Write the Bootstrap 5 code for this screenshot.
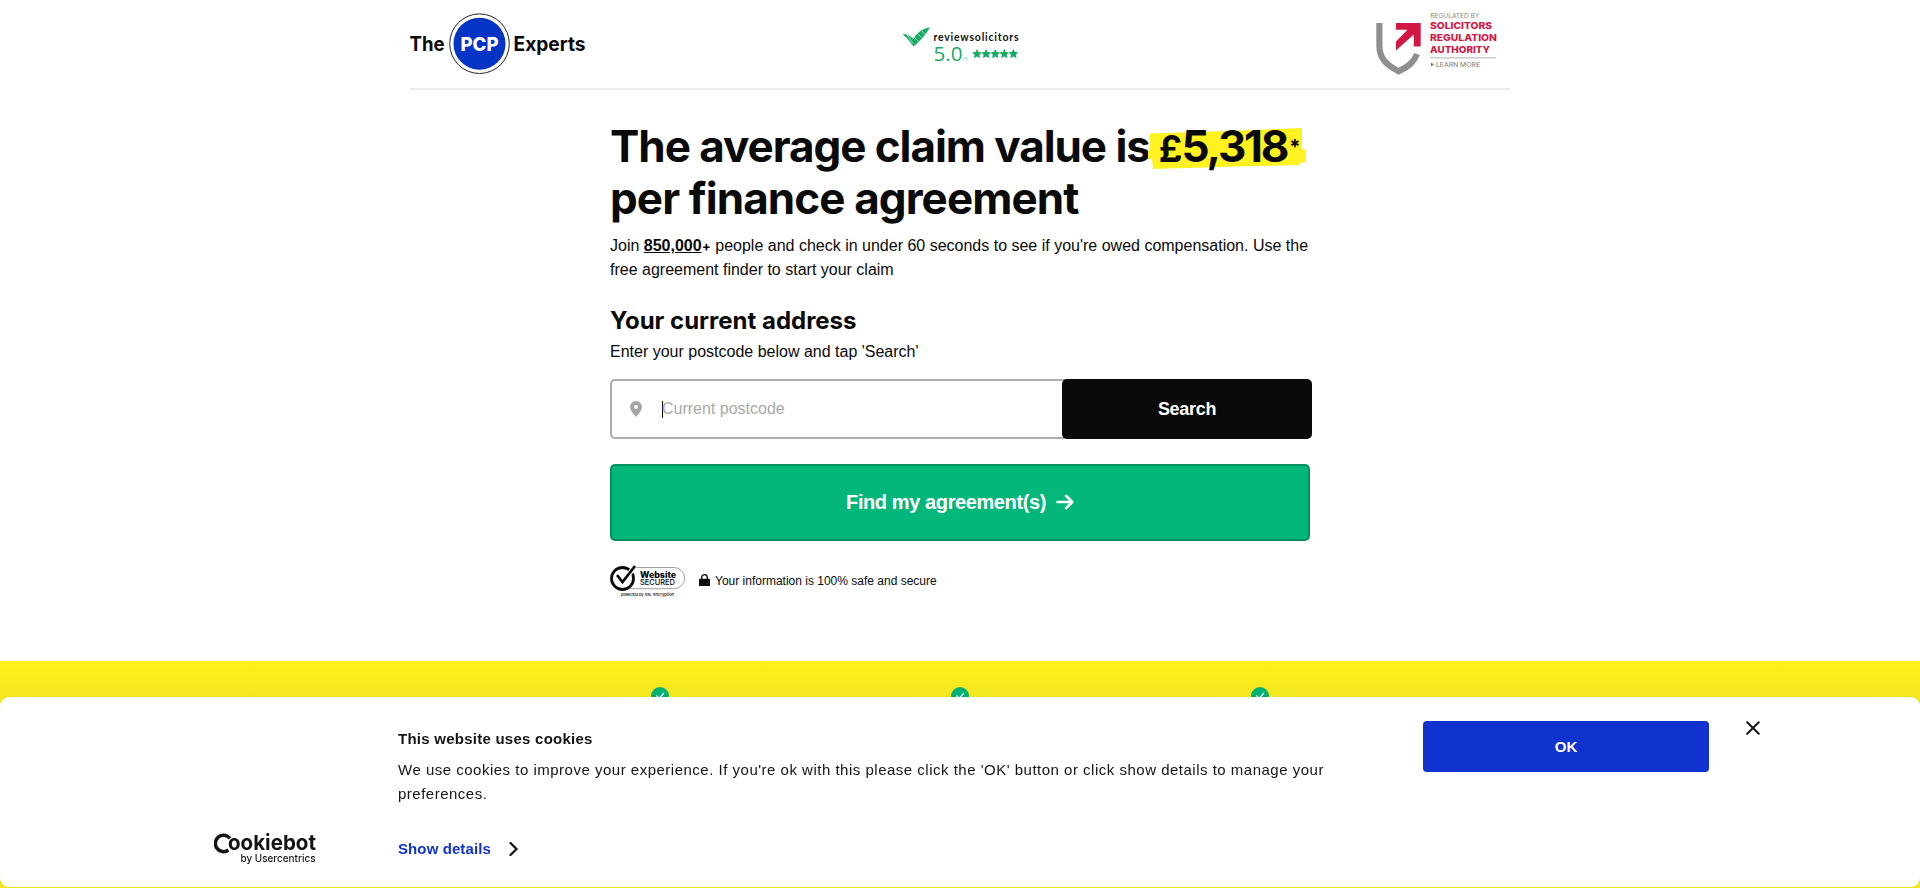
<!DOCTYPE html>
<html lang="en">
<head>
<meta charset="utf-8">
<meta name="viewport" content="width=device-width, initial-scale=1">
<title>The PCP Experts</title>
<link href="https://cdn.jsdelivr.net/npm/bootstrap@5.3.0/dist/css/bootstrap.min.css" rel="stylesheet">
<style>
  body { font-family: "Liberation Sans", Arial, sans-serif; color: #0a0a0a; background: #fff; height: 888px; overflow: hidden; }
  svg { display: block; flex: none; }
  .site-header { width: 1100px; height: 90px; border-bottom: 2px solid #ebebeb; }
  .review-logo { margin-right: 340px; }
  .claim-main { width: 700px; height: 571px; padding-top: 30px; }
  .headline { font: 700 44px/52px Inter, sans-serif; letter-spacing: -1.05px; white-space: nowrap; margin-bottom: 10px; }
  .headline-end { letter-spacing: -.9px; }
  .amount { position: relative; display: inline-block; margin-left: 9px; z-index: 0; letter-spacing: -2.2px; }
  .amount .marker-bg { position: absolute; left: -11px; top: 8px; z-index: -1; }
  .amount .pound { font-size: 37px; line-height: 1; letter-spacing: -1px; }
  .amount .star { font-size: 20px; vertical-align: 8px; letter-spacing: 0; line-height: 1; margin-left: 2px; }
  .intro { line-height: 24px; margin-bottom: 24px; }
  .intro .plus { font: 700 13.5px/1 Inter, sans-serif; }
  .subhead { font: 700 24px/30px Inter, sans-serif; letter-spacing: 0; margin-bottom: 4px; }
  .hint { line-height: 24px; margin-bottom: 15px; }
  .postcode { height: 60px; width: 702px; }
  .postcode-box { width: 460px; margin-right: -8px; border: 2px solid #adadad; border-radius: 5px; padding-left: 18px; gap: 20px; }
  .caret-line { width: 1px; height: 17px; background: #0a0a0a; margin-right: -1px; }
  .ph-text { color: #a9a9a9; }
  .btn-search { width: 250px; background: #0a0a0a !important; color: #fff !important; border: 0; border-radius: 5px; font-weight: 700; font-size: 18px; letter-spacing: -.3px; }
  .btn-find { width: 700px; height: 77px; margin-top: 25px; padding-top: 4px; background: #03b67a !important; border: 2px solid #078f5e !important; border-radius: 5px; color: #fff !important; font-weight: 700; font-size: 20px; letter-spacing: -.4px; gap: 10px; }
  .trust { margin-top: 24px; font-size: 12px; height: 34px; }
  .lock { margin: 9px 5px 0 13px; }
  .trust-text { padding-top: 7px; }
  .usp { height: 227px; background: linear-gradient(#fff01c, #f2e71f 38px, #f2e71f); padding-top: 26px; }
  .usp-row { width: 900px; }
  .cookie-panel { height: 190px; bottom: 1px; background: #fff; border-radius: 9px; letter-spacing: .5px; font-size: 15px; color: #141414; padding: 24px 160px 0 214px; box-shadow: 0 0 2px rgba(0,0,0,.08); }
  .cookie-brand { width: 184px; padding-top: 103px; }
  .cookie-body { width: 1025px; }
  .cookie-title { font-size: 15px; font-weight: 700; line-height: 24px; margin: 6px 0 7px; letter-spacing: .25px; }
  .cookie-copy { line-height: 24px; width: 940px; margin-bottom: 31px; }
  .cookie-more { color: #1032cf; font-weight: 700; gap: 18px; line-height: 24px; text-decoration: none; letter-spacing: .1px; }
  .btn-ok { width: 286px; height: 51px; background: #1032cf !important; color: #fff !important; border: 0; border-radius: 4px; font-weight: 700; font-size: 15px; padding: 1px 0 0; letter-spacing: 0; }
  .btn-x { margin-left: 37px; padding: 0; border: 0; background: none; }
</style>
</head>
<body>
<header class="site-header mx-auto d-flex justify-content-between align-items-start">
  <svg width="190" height="86" font-family="Inter, sans-serif" font-weight="700" fill="#0a0a0a" font-size="20">
    <text x="-.5" y="50.600" textLength="35" lengthAdjust="spacingAndGlyphs">The</text>
    <circle cx="69.500" cy="43.700" r="29.800" fill="#fff" stroke="#222" stroke-width="1"/>
    <circle cx="69.500" cy="43.700" r="26" fill="#0634c4"/>
    <text x="50.500" y="50.600" fill="#fff" font-weight="800" font-size="19" textLength="38" lengthAdjust="spacingAndGlyphs">PCP</text>
    <text x="103.500" y="50.600" textLength="72" lengthAdjust="spacingAndGlyphs">Experts</text>
  </svg>
  <svg class="review-logo ms-auto" width="132" height="86">
    <path d="M14.700 34Q20 33.500 25.500 39Q30 29.500 42 27.300Q36 38 25.500 46.500Q20 38.500 14.700 34z" fill="#16ac63"/>
    <path d="M19 34.500l6 9M27 38l3.500 3.500M30 34l3.500 3.500M34 31l2.500 3" stroke="#bdebd3" stroke-width=".8" fill="none"/>
    <text x="45.500" y="40.500" font-family="Lato, sans-serif" font-weight="700" font-size="10.500" fill="#111" textLength="85" lengthAdjust="spacing">reviewsolicitors</text>
    <text x="45.500" y="60.800" font-family="Open Sans, sans-serif" font-size="20.500" fill="#18ad68" textLength="29" lengthAdjust="spacingAndGlyphs">5.0</text>
    <text x="75" y="61" font-family="Open Sans, sans-serif" font-size="5" fill="#6cc79a">/5</text>
    <g fill="#16ac63">
      <path id="st" d="M89 49l1.500 3 3.500.4-2.600 2.400.7 3.500-3.100-1.800-3.100 1.800.7-3.500-2.600-2.400 3.500-.4z"/>
      <use href="#st" x="9.100"/><use href="#st" x="18.200"/><use href="#st" x="27.300"/><use href="#st" x="36.400"/>
    </g>
  </svg>
  <svg width="150" height="86">
    <path d="M19.400 23V46C19.400 59 27 65 38.700 71.300C49 66 54 62 57 54" fill="none" stroke="#8d8f90" stroke-width="6.200"/>
    <path d="M36 23H60.700V46.500H53.800V34.500L36 50.500V41.500L47.500 29.700H36z" fill="#d31745"/>
    <g font-family="Inter, sans-serif">
      <text x="70.300" y="18" font-size="5.800" fill="#888" textLength="49" lengthAdjust="spacingAndGlyphs">REGULATED BY</text>
      <g font-weight="800" font-size="9.600" fill="#d31745">
        <text x="70" y="29.300" textLength="62" lengthAdjust="spacingAndGlyphs">SOLICITORS</text>
        <text x="70" y="41" textLength="67" lengthAdjust="spacingAndGlyphs">REGULATION</text>
        <text x="70" y="52.500" textLength="60" lengthAdjust="spacingAndGlyphs">AUTHORITY</text>
      </g>
      <path d="M70 57.700H136" stroke="#ccc" stroke-width="1.500"/>
      <path d="M71 62.500l3 2-3 2z" fill="#777"/>
      <text x="76" y="66.700" font-size="6.300" fill="#777" textLength="44" lengthAdjust="spacingAndGlyphs">LEARN MORE</text>
    </g>
  </svg>
</header>

<main class="claim-main mx-auto">
  <h1 class="headline">The average claim value is<span class="amount"><svg class="marker-bg" width="160" height="44"><path d="M2 5.500L80 3L154 0V21L158 22V34L152 35V37L90 38.500L5 41L4 31H0V23L2 22z" fill="#fff220"/></svg><span class="pound">£</span>5,318<span class="star">*</span></span><br><span class="headline-end">per finance agreement</span></h1>
  <p class="intro">Join <b><u>850,000</u></b><span class="plus">+</span> people and check in under 60 seconds to see if you're owed compensation. Use the free agreement finder to start your claim</p>
  <h2 class="subhead">Your current address</h2>
  <p class="hint">Enter your postcode below and tap 'Search'</p>
  <div class="postcode d-flex">
    <div class="postcode-box d-flex align-items-center">
      <svg width="12" height="16" viewBox="0 0 12 16"><path d="M6 0a6 6 0 0 0-6 6c0 3.500 3 6.800 6 10 3-3.200 6-6.500 6-10a6 6 0 0 0-6-6zm0 8a2 2 0 1 1 0-4 2 2 0 0 1 0 4z" fill="#a6a6a6" fill-rule="evenodd"/></svg>
      <span class="d-flex align-items-center"><span class="caret-line"></span><span class="ph-text">Current postcode</span></span>
    </div>
    <button class="btn btn-search">Search</button>
  </div>
  <button class="btn btn-find d-flex align-items-center justify-content-center">Find my agreement(s)
    <svg width="18" height="16" viewBox="0 0 18 16" fill="none" stroke="#fff" stroke-width="2.600" stroke-linecap="round" stroke-linejoin="round"><path d="M1.500 8H16M10 1.800L16.300 8L10 14.200"/></svg>
  </button>
  <div class="trust d-flex">
    <svg width="76" height="34">
      <path d="M22 2.500H64a10.600 10.600 0 0 1 0 21.200H18" fill="none" stroke="#777" stroke-width=".7"/>
      <circle cx="12.500" cy="13.500" r="11" fill="#fff" stroke="#0a0a0a" stroke-width="2.800"/>
      <path d="M7.500 10.500l5 6.500L25 1.500" stroke="#fff" stroke-width="5" fill="none"/>
      <path d="M7 10l5.500 7L25 1" stroke="#0a0a0a" stroke-width="2.700" fill="none"/>
      <text x="30" y="12.600" font-family="Inter, sans-serif" font-weight="800" font-size="8.500" textLength="36" lengthAdjust="spacingAndGlyphs">Website</text>
      <text x="30" y="19.800" font-family="Inter, sans-serif" font-weight="500" font-size="7" textLength="35" lengthAdjust="spacingAndGlyphs">SECURED</text>
      <text x="11" y="30.500" font-family="Inter, sans-serif" font-size="3.900" font-weight="500" textLength="53" lengthAdjust="spacingAndGlyphs">powered by SSL Encryption</text>
    </svg>
    <svg class="lock" width="11" height="12" viewBox="0 0 11 12"><path d="M2.700 6V3.500a2.800 2.800 0 0 1 5.600 0V6" fill="none" stroke="#0a0a0a" stroke-width="1.300"/><rect y="4.800" width="11" height="7.200" rx=".6" fill="#0a0a0a"/></svg>
    <span class="trust-text">Your information is 100% safe and secure</span>
  </div>
</main>

<section class="usp">
  <div class="usp-row row g-0 mx-auto text-center">
    <div class="col-4"><svg class="mx-auto" width="18" height="18"><circle cx="9" cy="9" r="9" fill="#03b074"/><path d="M5.500 8.500l2.500 3 5-5.500" stroke="#fff" stroke-width="1.200" fill="none"/></svg></div>
    <div class="col-4"><svg class="mx-auto" width="18" height="18"><circle cx="9" cy="9" r="9" fill="#03b074"/><path d="M5.500 8.500l2.500 3 5-5.500" stroke="#fff" stroke-width="1.200" fill="none"/></svg></div>
    <div class="col-4"><svg class="mx-auto" width="18" height="18"><circle cx="9" cy="9" r="9" fill="#03b074"/><path d="M5.500 8.500l2.500 3 5-5.500" stroke="#fff" stroke-width="1.200" fill="none"/></svg></div>
  </div>
</section>

<div class="cookie-panel fixed-bottom d-flex align-items-start">
  <div class="cookie-brand">
    <svg width="106" height="42" font-family="Inter, sans-serif" fill="#141414" letter-spacing="0">
      <path d="M16 14.300A8.200 8.200 0 1 0 14.500 26" fill="none" stroke="#141414" stroke-width="3.500"/>
      <text x="14" y="26" font-weight="700" font-size="20.500" textLength="88" lengthAdjust="spacingAndGlyphs">ookiebot</text>
      <text x="26.500" y="37.500" font-size="10.300" font-weight="500" textLength="75" lengthAdjust="spacingAndGlyphs">by Usercentrics</text>
    </svg>
  </div>
  <div class="cookie-body">
    <h2 class="cookie-title">This website uses cookies</h2>
    <p class="cookie-copy">We use cookies to improve your experience. If you're ok with this please click the 'OK' button or click show details to manage your preferences.</p>
    <a class="cookie-more d-inline-flex align-items-center" href="#">Show details
      <svg width="10" height="14" viewBox="0 0 10 14"><path d="M1.500 1L7.500 7L1.500 13" fill="none" stroke="#141414" stroke-width="2.200" stroke-linecap="round"/></svg></a>
  </div>
  <button class="btn btn-ok">OK</button>
  <button class="btn-x" aria-label="Close"><svg width="14" height="14" viewBox="0 0 14 14"><path d="M1.200 1.200L12.800 12.800M12.800 1.200L1.200 12.800" stroke="#141414" stroke-width="2" stroke-linecap="round"/></svg></button>
</div>
<script src="https://cdn.jsdelivr.net/npm/bootstrap@5.3.0/dist/js/bootstrap.bundle.min.js"></script>
</body>
</html>
